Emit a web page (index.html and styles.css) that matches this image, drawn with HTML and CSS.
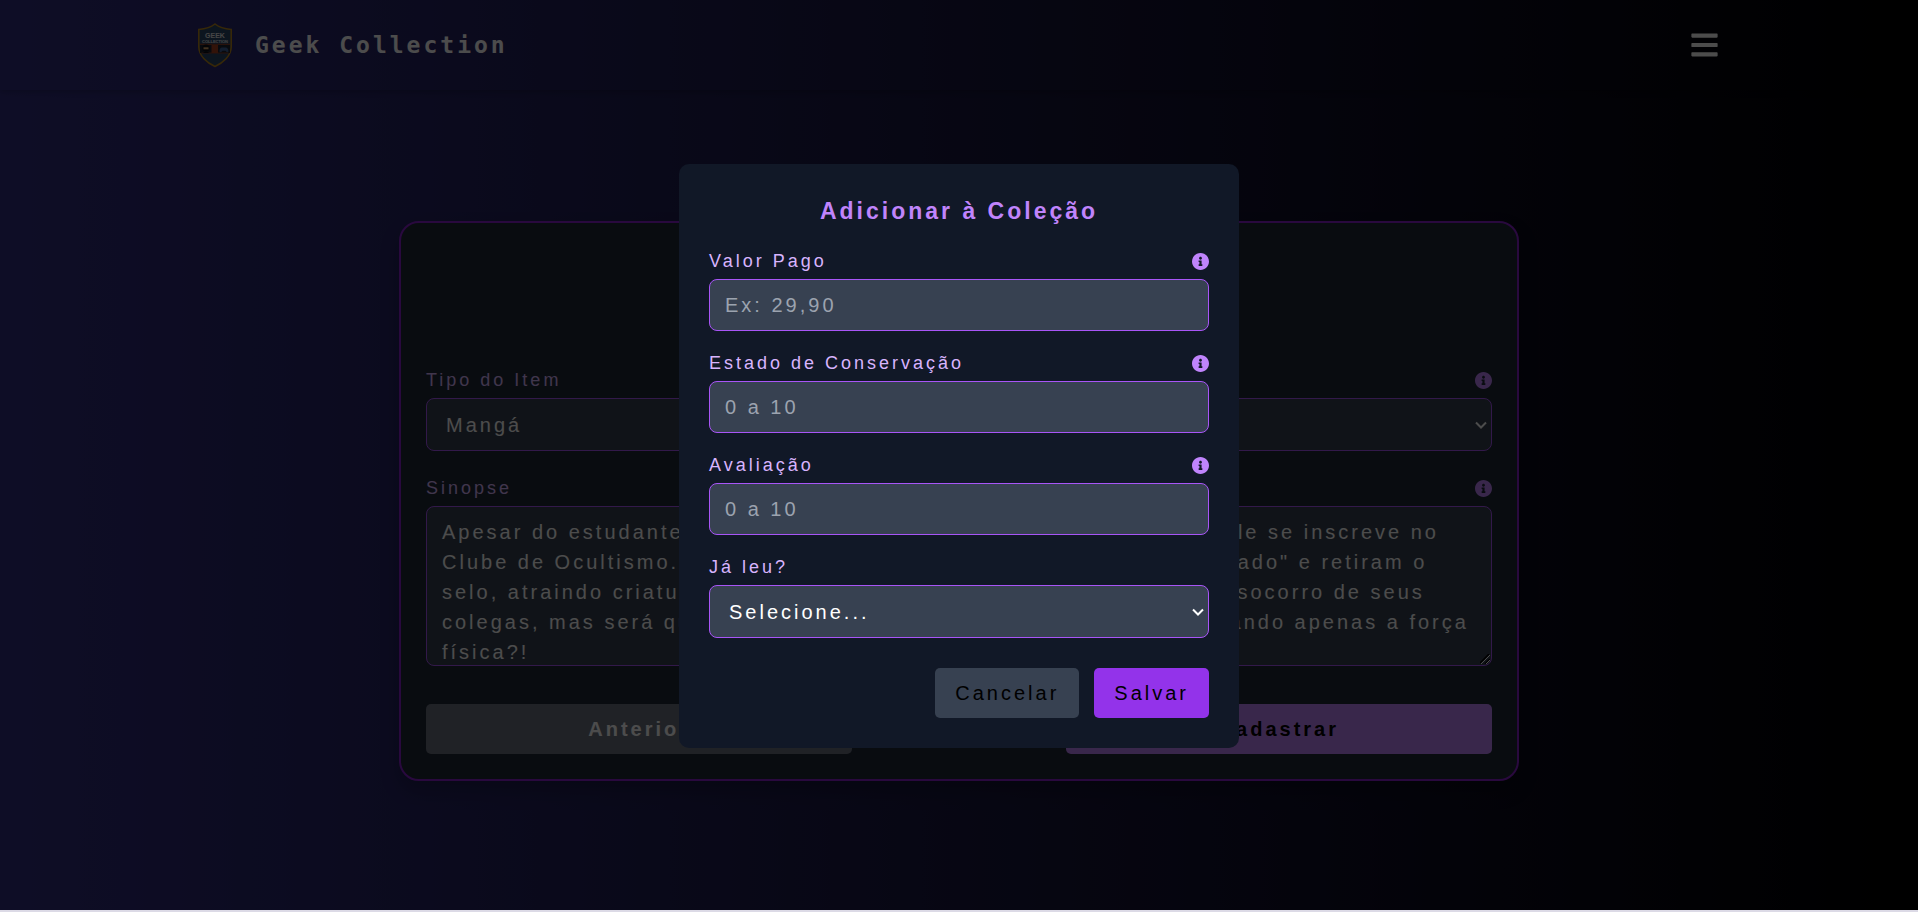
FILE: index.html
```html
<!DOCTYPE html>
<html lang="pt-BR">
<head>
<meta charset="utf-8">
<title>Geek Collection</title>
<link rel="stylesheet" href="styles.css">
</head>
<body>
<svg class="sprite" aria-hidden="true">
  <symbol id="info" viewBox="8 8 496 496"><path d="M256 8C119.043 8 8 119.083 8 256c0 136.997 111.043 248 248 248s248-111.003 248-248C504 119.083 392.957 8 256 8zm0 110c23.196 0 42 18.804 42 42s-18.804 42-42 42-42-18.804-42-42 18.804-42 42-42zm56 254c0 6.627-5.373 12-12 12h-88c-6.627 0-12-5.373-12-12v-24c0-6.627 5.373-12 12-12h12v-64h-12c-6.627 0-12-5.373-12-12v-24c0-6.627 5.373-12 12-12h64c6.627 0 12 5.373 12 12v100h12c6.627 0 12 5.373 12 12v24z"/></symbol>
</svg>
<div class="page">
  <header class="header">
    <a class="brand" href="#">
      <svg class="logo" viewBox="0 0 50 50" aria-hidden="true">
        <path d="M25 4C20 8 14 9 8.800 9.500V27C9 36 17 43 25 46.500C33 43 41 36 41.200 27V9.500C36 9 30 8 25 4Z" fill="#2b4668" stroke="#b8881c" stroke-width="1.600"/>
        <path d="M10 24.500H40V33H10Z" fill="#1d2230"/>
        <path d="M10 23.800h30v1.200H10zM11.500 32.500h27v1h-27z" fill="#8a3f26"/>
        <path d="M21.500 25h6.500v8h-6.500z" fill="#a84020"/>
        <circle cx="16" cy="28" r="3.600" fill="#0f0f16"/>
        <path d="M13.500 27.300h5v2h-5z" fill="#d9a66c"/>
        <path d="M12.500 33q3.500-3 7 0z" fill="#0f0f16"/>
        <path d="M29.500 31.500c0-3 1.500-4.500 3-4h3c2 0 3 2 3 4-1 1.500-2 .5-3-.7h-3c-1 1.200-2 2-3 .7z" fill="#3f639c"/>
        <text x="25" y="17.800" text-anchor="middle" class="logo-top">GEEK</text>
        <text x="25" y="22.800" text-anchor="middle" class="logo-sub">COLLECTION</text>
      </svg>
      <span class="brand-name">Geek Collection</span>
    </a>
    <button class="menu" type="button" aria-label="Menu">
      <svg class="menu-icon" viewBox="0 0 448 512" aria-hidden="true"><path d="M16 132h416c9 0 16-7 16-16V76c0-9-7-16-16-16H16C7 60 0 67 0 76v40c0 9 7 16 16 16zm0 160h416c9 0 16-7 16-16v-40c0-9-7-16-16-16H16c-9 0-16 7-16 16v40c0 9 7 16 16 16zm0 160h416c9 0 16-7 16-16v-40c0-9-7-16-16-16H16c-9 0-16 7-16 16v40c0 9 7 16 16 16z"/></svg>
    </button>
  </header>
  <main class="main">
    <form class="card">
      <div class="field">
        <div class="label-row"><label for="tipo">Tipo do Item</label><svg class="info"><use href="#info"/></svg></div>
        <select class="control" id="tipo"><option>Mangá</option></select>
      </div>
      <div class="field">
        <div class="label-row"><label for="sinopse">Sinopse</label><svg class="info"><use href="#info"/></svg></div>
        <textarea class="control synopsis" id="sinopse">Apesar do estudante colegial Yuuji Itadori ter grande força física, ele se inscreve no Clube de Ocultismo. Certo dia, eles encontram um "objeto amaldiçoado" e retiram o selo, atraindo criaturas chamadas de "maldições". Itadori corre em socorro de seus colegas, mas será que ele será capaz de lutar contra maldições usando apenas a força física?!</textarea>
      </div>
      <div class="card-actions">
        <button class="btn btn-wide btn-previous" type="button">Anterior</button>
        <button class="btn btn-wide btn-register" type="button">Cadastrar</button>
      </div>
    </form>
  </main>
</div>
<div class="overlay">
  <form class="modal" role="dialog" aria-labelledby="titulo">
    <h2 class="modal-title" id="titulo">Adicionar à Coleção</h2>
    <div class="modal-fields">
      <div class="field">
        <div class="label-row"><label for="valor">Valor Pago</label><svg class="info"><use href="#info"/></svg></div>
        <input class="control" id="valor" type="text" placeholder="Ex: 29,90">
      </div>
      <div class="field">
        <div class="label-row"><label for="estado">Estado de Conservação</label><svg class="info"><use href="#info"/></svg></div>
        <input class="control" id="estado" type="text" placeholder="0 a 10">
      </div>
      <div class="field">
        <div class="label-row"><label for="avaliacao">Avaliação</label><svg class="info"><use href="#info"/></svg></div>
        <input class="control" id="avaliacao" type="text" placeholder="0 a 10">
      </div>
      <div class="field">
        <div class="label-row"><label for="leu">Já leu?</label></div>
        <select class="control" id="leu"><option>Selecione...</option></select>
      </div>
    </div>
    <div class="modal-actions">
      <button class="btn btn-cancel" type="button">Cancelar</button>
      <button class="btn btn-save" type="button">Salvar</button>
    </div>
  </form>
</div>
</body>
</html>
```
FILE: styles.css
```css
* { box-sizing: border-box; }

body {
  margin: 0;
  min-height: 100vh;
  display: flex;
  flex-direction: column;
  font-family: "Liberation Sans", Arial, sans-serif;
  font-size: 20px;
  line-height: 30px;
  letter-spacing: 3px;
  color: #fff;
}

/* light edge along the bottom of the window */
body::after {
  content: "";
  position: fixed;
  inset: auto 0 0;
  z-index: 2;
  height: 2px;
  background: #dcdae6;
}

.sprite { position: absolute; width: 0; height: 0; }

.page {
  flex: 1;
  display: flex;
  flex-direction: column;
  background: linear-gradient(to right, #312e81, #000);
}

.header {
  display: flex;
  align-items: center;
  justify-content: space-between;
  padding: 20px 190px;
  box-shadow: 0 2px 6px rgba(0, 0, 0, 0.2);
}

.brand {
  display: flex;
  align-items: center;
  gap: 15px;
  color: #fff;
  text-decoration: none;
}

.logo { width: 50px; height: 50px; }
.logo text {
  font-family: "Liberation Sans", Arial, sans-serif;
  font-weight: 700;
  letter-spacing: 0;
  fill: #e8e8e8;
}
.logo-top { font-size: 7px; }
.logo-sub { font-size: 4px; }

.brand-name {
  font-family: "DejaVu Sans Mono", monospace;
  font-size: 23px;
  font-weight: 700;
}

.menu {
  display: flex;
  padding: 10px;
  border: 0;
  background: none;
  color: #fff;
}
.menu-icon { width: 27px; height: 30px; fill: currentColor; }

.main {
  flex: 1;
  display: flex;
  align-items: center;
  justify-content: center;
  padding: 0 20px;
}

.card {
  width: 100%;
  max-width: 1120px;
  padding: 145px 25px 25px;
  display: flex;
  flex-direction: column;
  gap: 25px;
  border: 2px solid #8a1fd0;
  border-radius: 20px;
  background: #1f2937;
  box-shadow: 0 10px 20px rgba(0, 0, 0, 0.2);
}

.field { display: flex; flex-direction: column; gap: 5px; }

.label-row {
  display: flex;
  align-items: center;
  justify-content: space-between;
  font-size: 18px;
  line-height: 25px;
  color: #d8b4fe;
}

.info { width: 17px; height: 17px; fill: #c084fc; }

.control {
  width: 100%;
  padding: 10px 15px;
  border: 1px solid #a855f7;
  border-radius: 8px;
  background-color: #374151;
  color: #fff;
  font: inherit;
  line-height: 30px;
  letter-spacing: inherit;
}
.control::placeholder { color: #9ca3af; opacity: 1; }
input.control { height: 52px; }

select.control {
  height: 53px;
  padding-left: 19px;
  appearance: none;
  background-image: url("data:image/svg+xml,%3Csvg xmlns='http://www.w3.org/2000/svg' viewBox='0 0 12 8'%3E%3Cpath d='M1 1.500l5 5 5-5' fill='none' stroke='white' stroke-width='2'/%3E%3C/svg%3E");
  background-repeat: no-repeat;
  background-position: right 4px center;
  background-size: 12px 8px;
}

.synopsis {
  display: block;
  height: 160px;
  overflow: hidden;
  resize: none;
  background-image: url("data:image/svg+xml,%3Csvg xmlns='http://www.w3.org/2000/svg' viewBox='0 0 10 10'%3E%3Cpath d='M0 9l9-9M5 10l5-5' stroke='black' stroke-width='1.500'/%3E%3Cpath d='M1 10l9-9M6 10l4-4' stroke='white' stroke-width='1'/%3E%3C/svg%3E");
  background-repeat: no-repeat;
  background-position: right 1px bottom 1px;
  background-size: 10px 10px;
}

.card-actions {
  display: flex;
  justify-content: space-between;
  padding-top: 13px;
}

.btn {
  padding: 10px 20px;
  border: 0;
  border-radius: 5px;
  font: inherit;
  letter-spacing: inherit;
  color: #000;
}
.btn-wide { width: 40%; font-weight: 700; }
.btn-previous { background: #6b7280; color: #fff; }
.btn-register { background: #c084fc; }
.btn-cancel { background: #374151; }
.btn-save { background: #9333ea; }

.overlay {
  position: fixed;
  inset: 0;
  display: flex;
  align-items: center;
  justify-content: center;
  background: rgba(0, 0, 0, 0.7);
}

.modal {
  width: 100%;
  max-width: 560px;
  padding: 30px;
  border-radius: 10px;
  background: #111827;
}

.modal-title {
  margin: 0 0 20px;
  font-size: 23px;
  line-height: 35px;
  text-align: center;
  color: #c084fc;
}

.modal-fields { display: flex; flex-direction: column; gap: 20px; }

.modal-actions {
  display: flex;
  justify-content: flex-end;
  gap: 15px;
  padding-top: 30px;
}
```
